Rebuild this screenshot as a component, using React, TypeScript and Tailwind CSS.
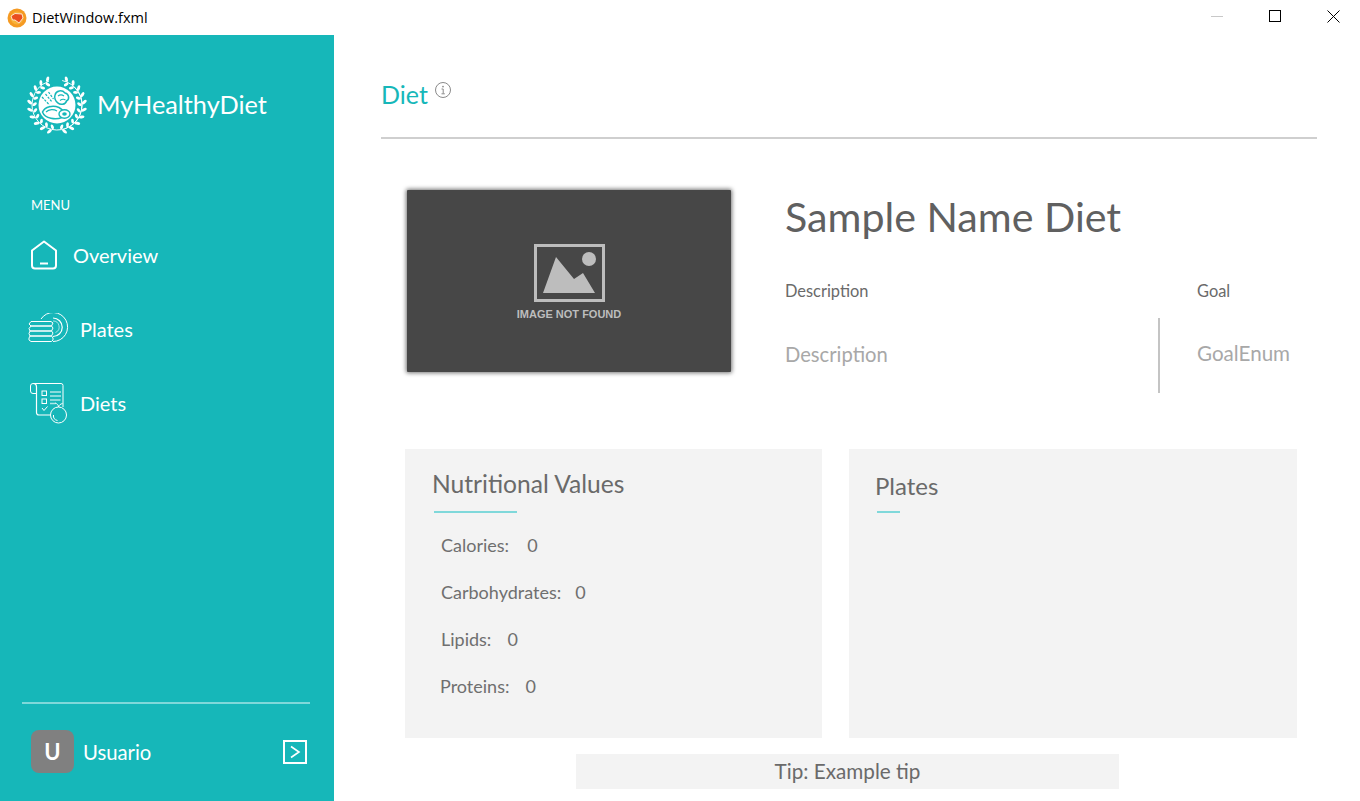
const FONT = "font-['Lato','Noto_Sans',sans-serif]"

function AppIcon() {
  return (
    <svg width="20" height="20" viewBox="0 0 20 20">
      <circle cx="10" cy="10" r="9.5" fill="#f59a23" />
      <circle cx="10" cy="10" r="6.5" fill="#f7b23b" />
      <path d="M4 8 L8 5.5 L15 6 L16 10 L12 15 L8 12 L5.5 12 Z" fill="#ea4e20" stroke="#ffe3c8" strokeWidth="1" />
    </svg>
  )
}

function WindowControls() {
  return (
    <div className="flex items-center gap-[46px] pr-5 pb-[3px]">
      <div className="w-3 h-px bg-[#c8c8c8]" />
      <div className="w-3 h-3 border border-black" />
      <svg width="13" height="13" viewBox="0 0 13 13" stroke="#000" strokeWidth="1">
        <path d="M0.5 0.5 L12.5 12.5 M12.5 0.5 L0.5 12.5" />
      </svg>
    </div>
  )
}

// laurel leaves: outer and inner row on each side, open at top and bottom
function Logo() {
  const angles = [20, 36, 52, 68, 84, 100, 116, 132, 148, 164]
  return (
    <svg width="60" height="60" viewBox="0 0 60 60" fill="#fff">
      <circle cx="30" cy="30" r="25" fill="none" stroke="#fff" strokeWidth="0.9" strokeDasharray="64 14.5" transform="rotate(-78 30 30)" />
      <circle cx="30" cy="30" r="25" fill="none" stroke="#fff" strokeWidth="0.9" strokeDasharray="64 93" transform="rotate(102 30 30) scale(1 -1) translate(0 -60)" />
      {angles.flatMap((a) =>
        [1, -1].flatMap((side) => [
          <ellipse
            key={`o${a}${side}`}
            cx="30"
            cy="2.6"
            rx="1.5"
            ry="2.9"
            transform={`rotate(${side * a} 30 30) rotate(${side * -35} 30 2.6)`}
          />,
          <ellipse
            key={`i${a}${side}`}
            cx="30"
            cy="7.6"
            rx="1.4"
            ry="2.5"
            transform={`rotate(${side * (a + 4)} 30 30) rotate(${side * 35} 30 7.6)`}
          />,
        ])
      )}
      <circle cx="30" cy="30" r="18.5" />
      <path d="M15.5 37 C18 31.5 26 30 32 32.5 C37 35 38.5 40 35 42.5 C29 45 18 44 15.5 37 Z" fill="none" stroke="#16b7b9" strokeWidth="1.5" />
      <path d="M19 37 C22 34 27 34 30 36" fill="none" stroke="#16b7b9" strokeWidth="1.1" />
      <ellipse cx="37.5" cy="39" rx="5.5" ry="4.2" fill="#fff" stroke="#16b7b9" strokeWidth="1.4" />
      <ellipse cx="37.5" cy="39" rx="2.3" ry="1.7" fill="#16b7b9" />
      <path d="M28 20 C29 15.5 35 14.5 38 18 C42 19 43 24 39.5 26 C38.5 30 33 30 31 28 C28.5 26.5 27 23 28 20 Z" fill="none" stroke="#16b7b9" strokeWidth="1.5" />
      <path d="M31 21 C33 19.5 35 19.5 37 21 M33 25.5 C35 24 37 24 38.5 25" fill="none" stroke="#16b7b9" strokeWidth="1.1" />
      <path d="M15 22 L22.5 30 M18.5 19 L25 27 M21.5 17 L26.5 24" stroke="#16b7b9" strokeWidth="1.2" strokeDasharray="2.4 1.2" />
    </svg>
  )
}

function HomeIcon() {
  return (
    <svg width="28" height="30" viewBox="0 0 28 30" fill="none" stroke="#fff" strokeWidth="2" strokeLinejoin="round">
      <path d="M2 10.5 L14 1.5 L26 10.5 V25.5 Q26 28.5 23 28.5 H5 Q2 28.5 2 25.5 Z" />
      <path d="M10 23.5 H18" />
    </svg>
  )
}

function PlatesIcon() {
  return (
    <svg width="42" height="32" viewBox="0 0 42 32" fill="none" stroke="#fff" strokeWidth="1">
      <path d="M13 6 A14.5 14.5 0 1 1 25 28.5" />
      <path d="M25 5 A9.2 9.2 0 0 1 25 23.5" strokeWidth="1.2" />
      <path d="M25 8 A6 6 0 0 1 27.5 19.5" opacity="0.6" />
      <path d="M3 8.5 H23 L25 10 L23.5 13 H3 L1 11 Z" />
      <path d="M3 13 H23.5 L25 15 L23.5 18 H2 L1 15.5 Z" />
      <path d="M2 18 H23.5 L25 20 L23.5 23 H2 L1 20.5 Z" />
      <path d="M2 23 H23.5 L25 25 V27 L23.5 28.5 H3 L1 27 V25 Z" />
    </svg>
  )
}

function DietsIcon() {
  return (
    <svg width="38" height="41" viewBox="0 0 38 41" fill="none" stroke="#fff" strokeWidth="1">
      <path d="M33 24 V2.5 Q33 0.5 31 0.5 H3 Q0.5 0.5 0.5 3 V8 Q0.5 10.5 3 10.5 H6" />
      <path d="M3 0.5 Q6.5 0.5 6.5 4 V29.5 Q6.5 32 9 32 H20" strokeWidth="1.2" />
      <rect x="12" y="8" width="4.5" height="4.5" />
      <rect x="12" y="16" width="4.5" height="4.5" />
      <path d="M12 25 L14 27.5 L17.5 23.5" />
      <path d="M20 9 H31 M20 13 H31" />
      <path d="M20 17 H30.5 M20 20.5 H25.5" opacity="0.65" strokeWidth="1.4" />
      <circle cx="28.5" cy="32" r="8" />
      <path d="M23.5 32 A5 5 0 0 0 27.5 37.5" />
      <path d="M28.5 24 C28.5 22 27 20.5 25 20 M28.5 24 C29 22 30.5 21 32.5 20.5" />
    </svg>
  )
}

function InfoIcon() {
  return (
    <svg width="16" height="16" viewBox="0 0 16 16" fill="none" stroke="#8a8a8a" strokeWidth="1">
      <circle cx="8" cy="8" r="7.5" />
      <circle cx="8" cy="4.6" r="0.9" fill="#8a8a8a" stroke="none" />
      <path d="M6.5 7 H8.2 V11.5 M6.5 11.8 H9.8" />
    </svg>
  )
}

function NavItem({ icon, label, className }: { icon: React.ReactNode; label: string; className: string }) {
  return (
    <div className={`flex items-center h-[74px] ${className}`}>
      {icon}
      <span className="text-[20px] text-white">{label}</span>
    </div>
  )
}

function Sidebar() {
  return (
    <aside className="w-[334px] shrink-0 bg-[#16b7b9] flex flex-col">
      <div className="flex items-center gap-[10px] pl-[27px] pt-[40px]">
        <Logo />
        <span className="text-[25.3px] text-white">MyHealthyDiet</span>
      </div>
      <div className="pl-[31px] mt-[62px] text-[13px] text-white leading-4">MENU</div>
      <nav className="mt-[5px] flex flex-col">
        <NavItem icon={<HomeIcon />} label="Overview" className="pl-[30px] gap-[15px]" />
        <NavItem icon={<PlatesIcon />} label="Plates" className="pl-[28px] gap-[10px]" />
        <NavItem icon={<DietsIcon />} label="Diets" className="pl-[30px] gap-[12px]" />
      </nav>
      <div className="mt-auto mx-[22px] mb-[26px] h-0.5 w-[288px] bg-[#7fd8da]" />
      <div className="flex items-center pl-[31px] pr-[27px] pb-[28px]">
        <div className="w-[43px] h-[43px] rounded-lg bg-[#808080] flex items-center justify-center text-white text-[22px] font-bold">
          U
        </div>
        <span className="ml-[9px] mt-0.5 text-[20.3px] text-white">Usuario</span>
        <div className="ml-auto w-6 h-6 border-2 border-white flex items-center justify-center">
          <svg width="12" height="14" viewBox="0 0 12 14" fill="none" stroke="#fff" strokeWidth="1.6">
            <path d="M2 1.5 L10 7 L2 12.5" />
          </svg>
        </div>
      </div>
    </aside>
  )
}

function MissingImage() {
  return (
    <div className="w-[324px] h-[182px] shrink-0 bg-[#474747] rounded-[1px] shadow-[0_0_4px_1px_rgba(0,0,0,0.55)] flex flex-col items-center pt-[54px]">
      <svg width="71" height="58" viewBox="0 0 71 58">
        <rect x="1.5" y="1.5" width="68" height="55" fill="none" stroke="#bdbdbd" strokeWidth="3" />
        <path d="M9 49 L22 13 L40 35 L49 29 L61 49 Z" fill="#bdbdbd" />
        <circle cx="55" cy="15" r="7" fill="#bdbdbd" />
      </svg>
      <span className="mt-[4px] text-[11px] font-bold text-[#bdbdbd] font-['Liberation_Sans',sans-serif]">IMAGE NOT FOUND</span>
    </div>
  )
}

function Stat({ label, value, className, gap }: { label: string; value: string; className: string; gap: string }) {
  return (
    <div className={`flex h-[47px] items-center text-[18px] text-[#6f6f6f] ${className}`}>
      <span>{label}:</span>
      <span className={gap}>{value}</span>
    </div>
  )
}

export default function App() {
  return (
    <div className={`w-[1360px] h-[801px] bg-white flex flex-col overflow-hidden ${FONT}`}>
      <header className="h-[35px] shrink-0 flex items-center justify-between pl-[7px]">
        <div className="flex items-center gap-[5px]">
          <AppIcon />
          <span className="text-[14.5px] text-black font-['Open_Sans',sans-serif]">DietWindow.fxml</span>
        </div>
        <WindowControls />
      </header>
      <div className="flex flex-1 min-h-0">
        <Sidebar />
        <main className="flex-1 flex flex-col">
          <div className="ml-[47px] mr-[43px] h-[104px] border-b-2 border-[#cfcfcf] flex items-start pt-[41px]">
            <span className="text-[25px] leading-9 text-[#16b7b9]">Diet</span>
            <div className="ml-[7px] mt-[6px]">
              <InfoIcon />
            </div>
          </div>
          <section className="flex ml-[73px] mt-[51px] h-[259px]">
            <MissingImage />
            <div className="ml-[54px] flex-1 flex flex-col">
              <h1 className="text-[41.2px] leading-[52px] text-[#606060]">Sample Name Diet</h1>
              <div className="flex mt-[39px]">
                <div className="w-[373px]">
                  <div className="text-[16.4px] leading-5 text-[#6a6a6a]">Description</div>
                  <div className="mt-[41px] text-[20.2px] leading-6 text-[#a8a8a8]">Description</div>
                </div>
                <div className="flex flex-col">
                  <div className="ml-[39px] text-[16.4px] leading-5 text-[#6a6a6a]">Goal</div>
                  <div className="mt-[17px] h-[75px] border-l-2 border-[#c4c4c4] pl-[37px] pt-[23px] text-[20.6px] leading-6 text-[#a8a8a8]">
                    GoalEnum
                  </div>
                </div>
              </div>
            </div>
          </section>
          <section className="flex ml-[71px] gap-[27px]">
            <div className="w-[417px] h-[289px] bg-[#f3f3f3] pt-[19px]">
              <h2 className="ml-[27px] text-[24.6px] leading-8 text-[#6a6a6a]">Nutritional Values</h2>
              <div className="ml-[29px] mt-[11px] w-[83px] h-0.5 bg-[#7fd8da]" />
              <div className="mt-[9px] flex flex-col">
                <Stat label="Calories" value="0" className="pl-[36px]" gap="ml-[18px]" />
                <Stat label="Carbohydrates" value="0" className="pl-[36px]" gap="ml-[14px]" />
                <Stat label="Lipids" value="0" className="pl-[36px]" gap="ml-[16px]" />
                <Stat label="Proteins" value="0" className="pl-[35px]" gap="ml-[16px]" />
              </div>
            </div>
            <div className="w-[448px] h-[289px] bg-[#f3f3f3] pt-[21px]">
              <h2 className="ml-[26px] text-[24px] leading-8 text-[#6a6a6a]">Plates</h2>
              <div className="ml-[28px] mt-[9px] w-[23px] h-0.5 bg-[#7fd8da]" />
            </div>
          </section>
          <div className="ml-[242px] mt-[16px] w-[543px] h-[35px] pt-px bg-[#f3f3f3] flex items-center justify-center text-[20.7px] text-[#6a6a6a]">
            Tip: Example tip
          </div>
        </main>
      </div>
    </div>
  )
}
